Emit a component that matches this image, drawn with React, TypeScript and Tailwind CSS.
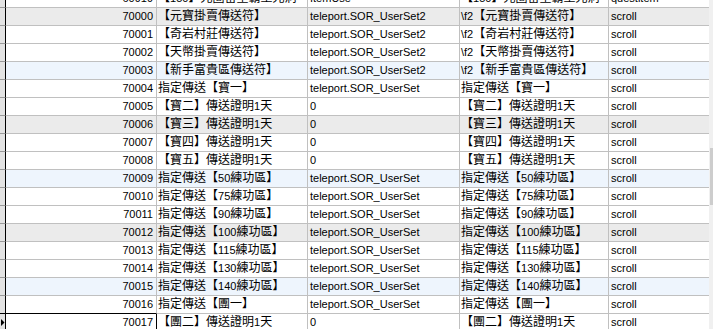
import React from "react";

type Row = { id: string; name: string; func: string; desc: string; type: string; bg?: "gray" | "blue"; current?: boolean };

const rows: Row[] = [
  { id: "60919", name: "【150】光圈留室霸王光洞", func: "ItemUse", desc: "【150】光圈留室霸王光洞", type: "questitem" },
  { id: "70000", name: "【元寶掛賣傳送符】", func: "teleport.SOR_UserSet2", desc: "\\f2【元寶掛賣傳送符】", type: "scroll", bg: "gray" },
  { id: "70001", name: "【奇岩村莊傳送符】", func: "teleport.SOR_UserSet2", desc: "\\f2【奇岩村莊傳送符】", type: "scroll" },
  { id: "70002", name: "【天幣掛賣傳送符】", func: "teleport.SOR_UserSet2", desc: "\\f2【天幣掛賣傳送符】", type: "scroll" },
  { id: "70003", name: "【新手富貴區傳送符】", func: "teleport.SOR_UserSet2", desc: "\\f2【新手富貴區傳送符】", type: "scroll", bg: "blue" },
  { id: "70004", name: "指定傳送【寶一】", func: "teleport.SOR_UserSet", desc: "指定傳送【寶一】", type: "scroll" },
  { id: "70005", name: "【寶二】傳送證明1天", func: "0", desc: "【寶二】傳送證明1天", type: "scroll" },
  { id: "70006", name: "【寶三】傳送證明1天", func: "0", desc: "【寶三】傳送證明1天", type: "scroll", bg: "gray" },
  { id: "70007", name: "【寶四】傳送證明1天", func: "0", desc: "【寶四】傳送證明1天", type: "scroll" },
  { id: "70008", name: "【寶五】傳送證明1天", func: "0", desc: "【寶五】傳送證明1天", type: "scroll" },
  { id: "70009", name: "指定傳送【50練功區】", func: "teleport.SOR_UserSet", desc: "指定傳送【50練功區】", type: "scroll", bg: "blue" },
  { id: "70010", name: "指定傳送【75練功區】", func: "teleport.SOR_UserSet", desc: "指定傳送【75練功區】", type: "scroll" },
  { id: "70011", name: "指定傳送【90練功區】", func: "teleport.SOR_UserSet", desc: "指定傳送【90練功區】", type: "scroll" },
  { id: "70012", name: "指定傳送【100練功區】", func: "teleport.SOR_UserSet", desc: "指定傳送【100練功區】", type: "scroll", bg: "gray" },
  { id: "70013", name: "指定傳送【115練功區】", func: "teleport.SOR_UserSet", desc: "指定傳送【115練功區】", type: "scroll" },
  { id: "70014", name: "指定傳送【130練功區】", func: "teleport.SOR_UserSet", desc: "指定傳送【130練功區】", type: "scroll" },
  { id: "70015", name: "指定傳送【140練功區】", func: "teleport.SOR_UserSet", desc: "指定傳送【140練功區】", type: "scroll", bg: "blue" },
  { id: "70016", name: "指定傳送【團一】", func: "teleport.SOR_UserSet", desc: "指定傳送【團一】", type: "scroll" },
  { id: "70017", name: "【團二】傳送證明1天", func: "0", desc: "【團二】傳送證明1天", type: "scroll", current: true },
];

function T({ s }: { s: string }) {
  const parts = s.split(/([\u2E80-\u9FFF\u3000-\u303F\uFF00-\uFFEF]+)/);
  return (
    <>
      {parts.map((p, i) =>
        /[\u2E80-\u9FFF\u3000-\u303F\uFF00-\uFFEF]/.test(p) ? (
          <span key={i} className="text-[12px]">{p}</span>
        ) : (
          <span key={i}>{p}</span>
        )
      )}
    </>
  );
}

export default function App() {
  return (
    <div
      className="w-[713px] h-[329px] overflow-hidden flex bg-white text-[11px] text-black"
      style={{ fontFamily: '"Liberation Sans", "Noto Sans CJK TC", sans-serif' }}
    >
      <div className="w-[709px] h-full overflow-hidden">
        <div className="-mt-[10px] flex flex-col">
          {rows.map((r, idx) => {
            const next = rows[idx + 1];
            const nextCurrent = next?.current;
            const bg = r.bg === "gray" ? "bg-[#ebebeb]" : r.bg === "blue" ? "bg-[#eef5fd]" : "bg-white";
            return (
              <div key={r.id} className="flex h-[18px] leading-[17px] whitespace-nowrap">
                <div
                  className={`w-[6px] shrink-0 border-r border-black border-b flex items-center bg-[#e3e3e3] ${
                    nextCurrent ? "border-b-black" : "border-b-[#9a9a9a]"
                  }`}
                >
                  {r.current && (
                    <svg width="4" height="7" viewBox="0 0 4 7" className="ml-[1px]">
                      <path d="M0 0 L3.5 3.5 L0 7 Z" fill="#000" />
                    </svg>
                  )}
                </div>
                <div
                  className={`w-[151px] shrink-0 border-r border-b overflow-hidden text-right pr-[3px] ${bg} ${
                    r.current ? "border-r-black" : "border-r-[#c0c0c0]"
                  } ${nextCurrent ? "border-b-black" : "border-b-[#c0c0c0]"}`}
                >
                  {r.id}
                </div>
                <div className={`w-[151px] shrink-0 border-r border-b border-[#c0c0c0] overflow-hidden pl-[1px] ${bg}`}>
                  <T s={r.name} />
                </div>
                <div className={`w-[152px] shrink-0 border-r border-b border-[#c0c0c0] overflow-hidden pl-[2px] ${bg}`}>
                  <T s={r.func} />
                </div>
                <div className={`w-[149px] shrink-0 border-r border-b border-[#c0c0c0] overflow-hidden pl-[1px] ${bg}`}>
                  <T s={r.desc} />
                </div>
                <div className={`w-[100px] shrink-0 border-b border-[#c0c0c0] overflow-hidden pl-[2px] ${bg}`}>
                  {r.type}
                </div>
              </div>
            );
          })}
        </div>
      </div>
      <div className="w-[4px] h-full bg-[#f0f0f0] flex flex-col">
        <div className="h-[148px]" />
        <div className="h-[57px] ml-[1px] bg-[#cdcdcd]" />
      </div>
    </div>
  );
}
